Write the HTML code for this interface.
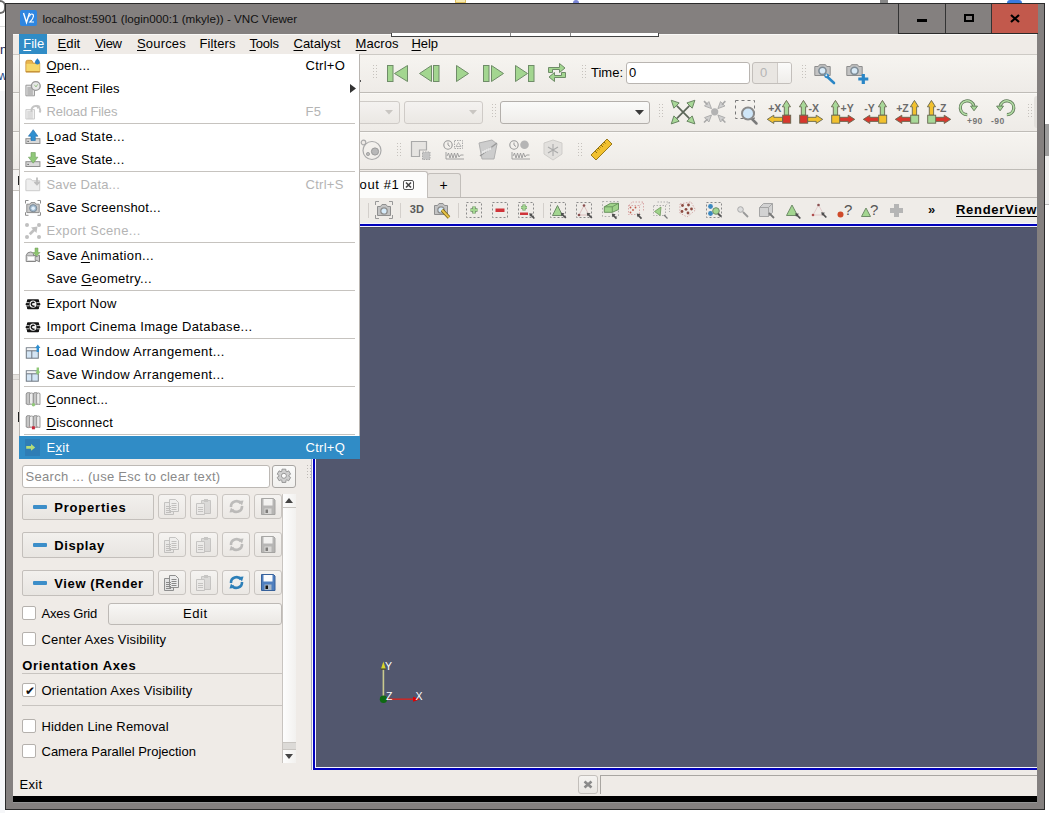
<!DOCTYPE html>
<html><head><meta charset="utf-8">
<style>
*{margin:0;padding:0;box-sizing:border-box}
html,body{width:1049px;height:813px;overflow:hidden;background:#fff;position:relative;font-family:"Liberation Sans",sans-serif;font-size:13px;color:#000}
.a{position:absolute}
svg.a{overflow:visible}
.t{position:absolute;white-space:nowrap;line-height:1}
u{text-decoration:underline;text-underline-offset:2px;text-decoration-thickness:1px}
.grip{width:4px;background-image:radial-gradient(circle at 1px 1px,#c3c0bc 0.9px,transparent 1px);background-size:3px 3px}
.btn{position:absolute;border:1px solid #bdb9b5;border-radius:3px;background:linear-gradient(#f7f6f4,#ebe8e4)}
.cb{position:absolute;width:14px;height:14px;border:1px solid #b5b1ad;background:#fff;border-radius:2px}
</style></head><body>

<div class="a" style="left:0px;top:0px;width:6px;height:14px;border:2px solid #6a6a6a;border-left:none;border-radius:0 7px 7px 0"></div>
<div class="a" style="left:0px;top:26px;width:5px;height:1px;background:#dcdcdc"></div>
<div class="a" style="left:1044px;top:124px;width:5px;height:32px;background:#9d9d9d"></div>
<div class="a" style="left:1044px;top:156px;width:5px;height:48px;background:#f0f0f0"></div>
<div class="a" style="left:1044px;top:204px;width:5px;height:1px;background:#bbb"></div>
<div class="a" style="left:455px;top:0px;width:11px;height:3px;background:#f5e9b0;border:1px solid #e0c060;border-top:none"></div>
<div class="a" style="left:573px;top:0px;width:6px;height:3px;background:#7a86d8;border-radius:3px 3px 0 0"></div>
<div class="a" style="left:880px;top:0px;width:8px;height:3px;background:#888"></div>
<div class="a" style="left:1007px;top:0px;width:15px;height:3px;background:#3a7be0;border-radius:6px 6px 0 0"></div>
<div class="a" style="left:0px;top:91px;width:5px;height:722px;background:#f6f7f9"></div>
<div class="t" style="left:0px;top:43.00px;font-size:13px;color:#1a2a5a;font-weight:normal;letter-spacing:0px;">n</div>
<div class="t" style="left:-2px;top:69.00px;font-size:13px;color:#2a4a8a;font-weight:normal;letter-spacing:0px;">w</div>
<div class="a" style="left:5px;top:3px;width:1040px;height:807px;background:#84807f;border:1px solid #2b2b2b"></div>
<div class="a" style="left:20px;top:10px;width:17px;height:16px;background:#2f86e0;border-radius:2px"></div>
<svg class="a" style="left:20px;top:10px" width="17" height="16" viewBox="0 0 17 16"><path d="M3.5 3 L6.5 12.5 L9.5 3" stroke="#fff" stroke-width="1.4" fill="none"/><path d="M9.5 6.5 Q10 4 11.8 4 Q13.6 4 13.4 6.5 Q13 9 10 12 L14 12" stroke="#fff" stroke-width="1.2" fill="none"/></svg>
<div class="t" style="left:42.5px;top:12.84px;font-size:11.65px;color:#111;font-weight:normal;letter-spacing:0px;">localhost:5901 (login000:1 (mkyle)) - VNC Viewer</div>
<div class="a" style="left:898px;top:4px;width:1px;height:29px;background:#333"></div>
<div class="a" style="left:945px;top:4px;width:1px;height:29px;background:#333"></div>
<div class="a" style="left:991px;top:4px;width:47px;height:29px;background:#c2594c;border-left:1px solid #333"></div>
<div class="a" style="left:917px;top:19px;width:10px;height:3px;background:#000"></div>
<div class="a" style="left:964px;top:14px;width:10px;height:8px;border:2px solid #000"></div>
<svg class="a" style="left:1010px;top:14px" width="10" height="9" viewBox="0 0 10 9"><path d="M1 1 L9 8 M9 1 L1 8" stroke="#000" stroke-width="2.2"/></svg>
<div class="a" style="left:13px;top:34px;width:1024px;height:762px;background:#efebe7"></div>
<div class="a" style="left:13px;top:34px;width:1024px;height:1px;background:#f9f8f6"></div>
<div class="a" style="left:898px;top:33px;width:140px;height:1px;background:#2a2a2a"></div>
<div class="a" style="left:13px;top:796px;width:1024px;height:6px;background:#000"></div>
<div class="a" style="left:13px;top:802px;width:1024px;height:1px;background:#959595"></div>
<div class="a" style="left:391px;top:33px;width:268px;height:4px;background:#fff;border:1px solid #444;border-top:none"></div>
<div class="a" style="left:510px;top:33px;width:1px;height:3px;background:#888"></div>
<div class="a" style="left:570px;top:33px;width:1px;height:3px;background:#888"></div>
<div class="a" style="left:13px;top:54px;width:1024px;height:1px;background:#cdcac5"></div>
<div class="a" style="left:19px;top:34px;width:28px;height:20px;background:#308cc6"></div>
<div class="t" style="left:23.3px;top:36.80px;font-size:13px;color:#fff;font-weight:normal;letter-spacing:-0.033px;"><u>F</u>ile</div>
<div class="t" style="left:57.6px;top:36.80px;font-size:13px;color:#000;font-weight:normal;letter-spacing:0.067px;"><u>E</u>dit</div>
<div class="t" style="left:95px;top:36.80px;font-size:13px;color:#000;font-weight:normal;letter-spacing:-0.333px;"><u>V</u>iew</div>
<div class="t" style="left:137px;top:36.80px;font-size:13px;color:#000;font-weight:normal;letter-spacing:0.167px;"><u>S</u>ources</div>
<div class="t" style="left:199.5px;top:36.80px;font-size:13px;color:#000;font-weight:normal;letter-spacing:0.083px;">Fi<u>l</u>ters</div>
<div class="t" style="left:249.5px;top:36.80px;font-size:13px;color:#000;font-weight:normal;letter-spacing:-0.2px;"><u>T</u>ools</div>
<div class="t" style="left:293.5px;top:36.80px;font-size:13px;color:#000;font-weight:normal;letter-spacing:0.0px;"><u>C</u>atalyst</div>
<div class="t" style="left:355.6px;top:36.80px;font-size:13px;color:#000;font-weight:normal;letter-spacing:0.04px;"><u>M</u>acros</div>
<div class="t" style="left:411.5px;top:36.80px;font-size:13px;color:#000;font-weight:normal;letter-spacing:-0.1px;"><u>H</u>elp</div>
<div class="a" style="left:13px;top:55px;width:1024px;height:37px;background:linear-gradient(#f6f4f0,#eeebe7)"></div>
<div class="a" style="left:13px;top:93px;width:1024px;height:38px;background:linear-gradient(#f6f4f0,#eeebe7)"></div>
<div class="a" style="left:13px;top:132px;width:1024px;height:37px;background:linear-gradient(#f6f4f0,#eeebe7)"></div>
<div class="a" style="left:13px;top:93px;width:1024px;height:1px;background:#faf9f6"></div>
<div class="a" style="left:13px;top:132px;width:1024px;height:1px;background:#faf9f6"></div>
<div class="a" style="left:13px;top:92px;width:1024px;height:1px;background:#bfbcb7"></div>
<div class="a" style="left:13px;top:131px;width:1024px;height:1px;background:#bfbcb7"></div>
<div class="a" style="left:13px;top:169px;width:1024px;height:1px;background:#bfbcb7"></div>
<div class="a" style="left:357px;top:80px;width:4px;height:2px;background:#555"></div>
<svg class="a" style="left:373px;top:65px" width="4" height="17" viewBox="0 0 4 17"><g fill="#c6c2bd"><rect x="0" y="0" width="1" height="1"/><rect x="3" y="0" width="1" height="1"/><rect x="0" y="3" width="1" height="1"/><rect x="3" y="3" width="1" height="1"/><rect x="0" y="6" width="1" height="1"/><rect x="3" y="6" width="1" height="1"/><rect x="0" y="9" width="1" height="1"/><rect x="3" y="9" width="1" height="1"/><rect x="0" y="12" width="1" height="1"/><rect x="3" y="12" width="1" height="1"/></g></svg>
<svg class="a" style="left:387px;top:65px" width="21" height="17" viewBox="0 0 21 17"><g fill="#a3d690" stroke="#6f8c68" stroke-width="1"><rect x="0.5" y="0.5" width="5.5" height="16"/><path d="M20.5 0.5 V16.5 L7.5 8.5z"/></g></svg>
<svg class="a" style="left:419px;top:65px" width="21" height="17" viewBox="0 0 21 17"><g fill="#a3d690" stroke="#6f8c68" stroke-width="1"><path d="M12.5 0.5 V16.5 L0.5 8.5z"/><rect x="14.5" y="0.5" width="5.5" height="16"/></g></svg>
<svg class="a" style="left:455px;top:65px" width="15" height="17" viewBox="0 0 15 17"><g fill="#a3d690" stroke="#6f8c68" stroke-width="1"><path d="M1.5 0.5 V16.5 L13.5 8.5z"/></g></svg>
<svg class="a" style="left:483px;top:65px" width="21" height="17" viewBox="0 0 21 17"><g fill="#a3d690" stroke="#6f8c68" stroke-width="1"><rect x="0.5" y="0.5" width="5.5" height="16"/><path d="M8.5 0.5 V16.5 L20.5 8.5z"/></g></svg>
<svg class="a" style="left:515px;top:65px" width="21" height="17" viewBox="0 0 21 17"><g fill="#a3d690" stroke="#6f8c68" stroke-width="1"><path d="M0.5 0.5 V16.5 L12.5 8.5z"/><rect x="13.5" y="0.5" width="5.5" height="16"/></g></svg>
<svg class="a" style="left:548px;top:63px" width="18" height="19" viewBox="0 0 18 19"><g fill="#a3d690" stroke="#6f8c68" stroke-width="1"><path d="M0.5 4.5 h11 v-4 l5.5 4.5 -5.5 4.5 v-3 h-7 v3 h-4z"/><path d="M17.5 14.5 h-11 v4 l-5.5 -4.5 5.5 -4.5 v3 h7 v-3 h4z"/></g></svg>
<svg class="a" style="left:582px;top:65px" width="4" height="17" viewBox="0 0 4 17"><g fill="#c6c2bd"><rect x="0" y="0" width="1" height="1"/><rect x="3" y="0" width="1" height="1"/><rect x="0" y="3" width="1" height="1"/><rect x="3" y="3" width="1" height="1"/><rect x="0" y="6" width="1" height="1"/><rect x="3" y="6" width="1" height="1"/><rect x="0" y="9" width="1" height="1"/><rect x="3" y="9" width="1" height="1"/><rect x="0" y="12" width="1" height="1"/><rect x="3" y="12" width="1" height="1"/></g></svg>
<div class="t" style="left:591px;top:66.40px;font-size:13px;color:#000;font-weight:normal;letter-spacing:0.0px;">Time:</div>
<div class="a" style="left:626px;top:62px;width:124px;height:22px;background:#fff;border:1px solid #b9b5b1;border-radius:3px"></div>
<div class="t" style="left:629px;top:66.40px;font-size:13px;color:#000;font-weight:normal;letter-spacing:0.2px;">0</div>
<div class="a" style="left:752px;top:62px;width:40px;height:22px;background:#e9e6e2;border:1px solid #c3bfbb;border-radius:3px"></div>
<div class="a" style="left:777px;top:63px;width:1px;height:20px;background:#cfcbc7"></div>
<div class="t" style="left:760px;top:66.40px;font-size:13px;color:#b5b5b5;font-weight:normal;letter-spacing:0.2px;">0</div>
<svg class="a" style="left:802px;top:65px" width="4" height="17" viewBox="0 0 4 17"><g fill="#c6c2bd"><rect x="0" y="0" width="1" height="1"/><rect x="3" y="0" width="1" height="1"/><rect x="0" y="3" width="1" height="1"/><rect x="3" y="3" width="1" height="1"/><rect x="0" y="6" width="1" height="1"/><rect x="3" y="6" width="1" height="1"/><rect x="0" y="9" width="1" height="1"/><rect x="3" y="9" width="1" height="1"/><rect x="0" y="12" width="1" height="1"/><rect x="3" y="12" width="1" height="1"/></g></svg>
<svg class="a" style="left:814px;top:63px" width="24" height="22" viewBox="0 0 24 22"><path d="M0.8 3.5 h3.5 l1.2 -1.8 h6 l1.2 1.8 h3.5 v9 h-15.4z" fill="#c3c3c3" stroke="#8d8d8d" stroke-linejoin="round"/><circle cx="8.5" cy="7.8" r="3.6" fill="#d8e9f6" stroke="#7f8c96" stroke-width="1.6"/><path d="M13 13.5 L20 20" stroke="#2a86c6" stroke-width="2.6" stroke-linecap="round"/><circle cx="12.6" cy="12.8" r="2.4" fill="#2a86c6"/><circle cx="12.3" cy="12.3" r="1" fill="#efebe7"/></svg>
<svg class="a" style="left:846px;top:63px" width="24" height="22" viewBox="0 0 24 22"><path d="M0.8 3.5 h3.5 l1.2 -1.8 h6 l1.2 1.8 h3.5 v9 h-15.4z" fill="#c3c3c3" stroke="#8d8d8d" stroke-linejoin="round"/><circle cx="8.5" cy="7.8" r="3.6" fill="#d8e9f6" stroke="#7f8c96" stroke-width="1.6"/><path d="M17.3 11 v10 M12.3 16 h10" stroke="#2a86c6" stroke-width="3.2"/></svg>
<div class="a" style="left:778px;top:63px;width:13px;height:20px;background:linear-gradient(#fbfbfa,#efedea);border-radius:0 2px 2px 0"></div>
<div class="a" style="left:300px;top:101px;width:100px;height:23px;background:linear-gradient(#f4f2f0,#ebe8e4);border:1px solid #cfcbc7;border-radius:3px"></div>
<svg class="a" style="left:385px;top:110px" width="8" height="5" viewBox="0 0 8 5"><path d="M0 0h8l-4 4.5z" fill="#c9c6c2"/></svg>
<div class="a" style="left:404px;top:101px;width:79px;height:23px;background:linear-gradient(#f4f2f0,#ebe8e4);border:1px solid #cfcbc7;border-radius:3px"></div>
<svg class="a" style="left:469px;top:110px" width="8" height="5" viewBox="0 0 8 5"><path d="M0 0h8l-4 4.5z" fill="#c9c6c2"/></svg>
<svg class="a" style="left:492px;top:104px" width="4" height="17" viewBox="0 0 4 17"><g fill="#c6c2bd"><rect x="0" y="0" width="1" height="1"/><rect x="3" y="0" width="1" height="1"/><rect x="0" y="3" width="1" height="1"/><rect x="3" y="3" width="1" height="1"/><rect x="0" y="6" width="1" height="1"/><rect x="3" y="6" width="1" height="1"/><rect x="0" y="9" width="1" height="1"/><rect x="3" y="9" width="1" height="1"/><rect x="0" y="12" width="1" height="1"/><rect x="3" y="12" width="1" height="1"/></g></svg>
<div class="a" style="left:500px;top:101px;width:150px;height:23px;background:linear-gradient(#fafaf9,#efedea);border:1px solid #b3afab;border-radius:3px"></div>
<svg class="a" style="left:635px;top:110px" width="9" height="5" viewBox="0 0 9 5"><path d="M0 0h9l-4.5 5z" fill="#3a3a3a"/></svg>
<svg class="a" style="left:659px;top:104px" width="4" height="17" viewBox="0 0 4 17"><g fill="#c6c2bd"><rect x="0" y="0" width="1" height="1"/><rect x="3" y="0" width="1" height="1"/><rect x="0" y="3" width="1" height="1"/><rect x="3" y="3" width="1" height="1"/><rect x="0" y="6" width="1" height="1"/><rect x="3" y="6" width="1" height="1"/><rect x="0" y="9" width="1" height="1"/><rect x="3" y="9" width="1" height="1"/><rect x="0" y="12" width="1" height="1"/><rect x="3" y="12" width="1" height="1"/></g></svg>
<svg class="a" style="left:668px;top:97px" width="30" height="30" viewBox="0 0 30 30"><path d="M8.9 8.9 L21.3 21.3 M21.3 8.9 L8.9 21.3" stroke="#5c6659" stroke-width="1.7"/><g fill="#a8d898" stroke="#5f7a58" stroke-width="0.9" stroke-linejoin="round"><path d="M3.25 3.25 L11.2 5.9 L5.9 11.2z"/><path d="M26.9 3.25 L18.9 5.9 L24.2 11.2z"/><path d="M3.25 26.9 L11.2 24.2 L5.9 18.9z"/><path d="M26.9 26.9 L18.9 24.2 L24.2 18.9z"/></g></svg>
<svg class="a" style="left:668px;top:97px" width="62" height="30" viewBox="0 0 62 30"><circle cx="46.7" cy="14.8" r="3.6" fill="#b3b3b3"/><g fill="#cfcfcf" stroke="#a8a8a8" stroke-width="0.9" stroke-linejoin="round"><path d="M43.5 11.600000000000001 L36.5 9.000000000000002 L40.9 4.600000000000001z"/><path d="M39.5 7.600000000000001 L36.0 4.100000000000001" stroke-width="1.6"/><path d="M49.900000000000006 11.600000000000001 L56.900000000000006 9.000000000000002 L52.50000000000001 4.600000000000001z"/><path d="M53.900000000000006 7.600000000000001 L57.400000000000006 4.100000000000001" stroke-width="1.6"/><path d="M43.5 18.0 L36.5 20.6 L40.9 25.0z"/><path d="M39.5 22.0 L36.0 25.5" stroke-width="1.6"/><path d="M49.900000000000006 18.0 L56.900000000000006 20.6 L52.50000000000001 25.0z"/><path d="M53.900000000000006 22.0 L57.400000000000006 25.5" stroke-width="1.6"/></g></svg>
<svg class="a" style="left:735px;top:100px" width="25" height="25" viewBox="0 0 25 25"><rect x="0.5" y="0.5" width="19" height="18" fill="none" stroke="#777" stroke-dasharray="3 3"/><path d="M15 17 L21.5 23.5" stroke="#7a7a7a" stroke-width="2.5" stroke-linecap="round"/><circle cx="13" cy="13.5" r="6" fill="#cfe6f8" stroke="#8a8a8a" stroke-width="2"/></svg>
<svg class="a" style="left:767px;top:100px" width="25" height="24" viewBox="0 0 25 24"><path d="M15.5 17.3 H6.8 V15.2 L0.3 19.35 L6.8 23.5 V21.4 H15.5z" fill="#f2c12e" stroke="#66664e" stroke-width="0.9" stroke-linejoin="round"/><path d="M19.45 0.4 L23.5 6.8 H21.6 V15.2 H17.3 V6.8 H15.399999999999999z" fill="#a8d898" stroke="#66664e" stroke-width="0.9" stroke-linejoin="round"/><rect x="15.7" y="15.2" width="8" height="8" fill="#d8372d" stroke="#66664e" stroke-width="0.9"/><text x="1.2" y="11.7" font-family="Liberation Sans" font-weight="bold" font-size="10.5" fill="#6a6a6a">+X</text></svg>
<svg class="a" style="left:799px;top:100px" width="25" height="24" viewBox="0 0 25 24"><path d="M8.5 17.3 H17.2 V15.2 L23.7 19.35 L17.2 23.5 V21.4 H8.5z" fill="#f2c12e" stroke="#66664e" stroke-width="0.9" stroke-linejoin="round"/><path d="M4.45 0.4 L8.5 6.8 H6.6000000000000005 V15.2 H2.3000000000000003 V6.8 H0.4z" fill="#a8d898" stroke="#66664e" stroke-width="0.9" stroke-linejoin="round"/><rect x="0.7" y="15.2" width="8" height="8" fill="#d8372d" stroke="#66664e" stroke-width="0.9"/><text x="9.5" y="11.7" font-family="Liberation Sans" font-weight="bold" font-size="10.5" fill="#6a6a6a">-X</text></svg>
<svg class="a" style="left:831px;top:100px" width="25" height="24" viewBox="0 0 25 24"><path d="M8.5 17.3 H17.2 V15.2 L23.7 19.35 L17.2 23.5 V21.4 H8.5z" fill="#d8372d" stroke="#66664e" stroke-width="0.9" stroke-linejoin="round"/><path d="M4.45 0.4 L8.5 6.8 H6.6000000000000005 V15.2 H2.3000000000000003 V6.8 H0.4z" fill="#a8d898" stroke="#66664e" stroke-width="0.9" stroke-linejoin="round"/><rect x="0.7" y="15.2" width="8" height="8" fill="#f2c12e" stroke="#66664e" stroke-width="0.9"/><text x="9.5" y="11.7" font-family="Liberation Sans" font-weight="bold" font-size="10.5" fill="#6a6a6a">+Y</text></svg>
<svg class="a" style="left:863px;top:100px" width="25" height="24" viewBox="0 0 25 24"><path d="M15.5 17.3 H6.8 V15.2 L0.3 19.35 L6.8 23.5 V21.4 H15.5z" fill="#d8372d" stroke="#66664e" stroke-width="0.9" stroke-linejoin="round"/><path d="M19.45 0.4 L23.5 6.8 H21.6 V15.2 H17.3 V6.8 H15.399999999999999z" fill="#a8d898" stroke="#66664e" stroke-width="0.9" stroke-linejoin="round"/><rect x="15.7" y="15.2" width="8" height="8" fill="#f2c12e" stroke="#66664e" stroke-width="0.9"/><text x="1.2" y="11.7" font-family="Liberation Sans" font-weight="bold" font-size="10.5" fill="#6a6a6a">-Y</text></svg>
<svg class="a" style="left:895px;top:100px" width="25" height="24" viewBox="0 0 25 24"><path d="M15.5 17.3 H6.8 V15.2 L0.3 19.35 L6.8 23.5 V21.4 H15.5z" fill="#d8372d" stroke="#66664e" stroke-width="0.9" stroke-linejoin="round"/><path d="M19.45 0.4 L23.5 6.8 H21.6 V15.2 H17.3 V6.8 H15.399999999999999z" fill="#f2c12e" stroke="#66664e" stroke-width="0.9" stroke-linejoin="round"/><rect x="15.7" y="15.2" width="8" height="8" fill="#a8d898" stroke="#66664e" stroke-width="0.9"/><text x="1.2" y="11.7" font-family="Liberation Sans" font-weight="bold" font-size="10.5" fill="#6a6a6a">+Z</text></svg>
<svg class="a" style="left:927px;top:100px" width="25" height="24" viewBox="0 0 25 24"><path d="M8.5 17.3 H17.2 V15.2 L23.7 19.35 L17.2 23.5 V21.4 H8.5z" fill="#d8372d" stroke="#66664e" stroke-width="0.9" stroke-linejoin="round"/><path d="M4.45 0.4 L8.5 6.8 H6.6000000000000005 V15.2 H2.3000000000000003 V6.8 H0.4z" fill="#f2c12e" stroke="#66664e" stroke-width="0.9" stroke-linejoin="round"/><rect x="0.7" y="15.2" width="8" height="8" fill="#a8d898" stroke="#66664e" stroke-width="0.9"/><text x="9.5" y="11.7" font-family="Liberation Sans" font-weight="bold" font-size="10.5" fill="#6a6a6a">-Z</text></svg>
<svg class="a" style="left:955px;top:96px" width="80" height="32" viewBox="0 0 80 32"><g fill="none"><path d="M12.2 18.65 A6.9 6.9 0 1 1 18.86 9.96" stroke="#5f7a58" stroke-width="3.2"/><path d="M12.2 18.65 A6.9 6.9 0 1 1 18.86 9.96" stroke="#b3dda5" stroke-width="1.5"/><path d="M51.9 18.65 A6.9 6.9 0 1 0 45.24 9.96" stroke="#5f7a58" stroke-width="3.2"/><path d="M51.9 18.65 A6.9 6.9 0 1 0 45.24 9.96" stroke="#b3dda5" stroke-width="1.5"/></g><g fill="#a8d898" stroke="#5f7a58" stroke-width="0.9" stroke-linejoin="round"><path d="M15.6 10.1 L22.5 10.1 L19 14.8z"/><path d="M48.5 10.1 L41.6 10.1 L45.1 14.8z"/></g><g font-family="Liberation Sans" font-weight="bold" font-size="8.6" fill="#777" letter-spacing="0.4"><text x="12" y="27.6">+90</text><text x="36" y="27.6">-90</text></g></svg>
<svg class="a" style="left:1028px;top:104px" width="4" height="17" viewBox="0 0 4 17"><g fill="#c6c2bd"><rect x="0" y="0" width="1" height="1"/><rect x="3" y="0" width="1" height="1"/><rect x="0" y="3" width="1" height="1"/><rect x="3" y="3" width="1" height="1"/><rect x="0" y="6" width="1" height="1"/><rect x="3" y="6" width="1" height="1"/><rect x="0" y="9" width="1" height="1"/><rect x="3" y="9" width="1" height="1"/><rect x="0" y="12" width="1" height="1"/><rect x="3" y="12" width="1" height="1"/></g></svg>
<div class="a" style="left:1034px;top:96px;width:4px;height:32px;background:#e4e1dd;border-radius:3px 0 0 3px"></div>
<svg class="a" style="left:360px;top:139px" width="22" height="22" viewBox="0 0 22 22"><g fill="none" stroke="#aaa" stroke-width="1.2"><circle cx="12" cy="11.5" r="9"/><circle cx="3.5" cy="3.5" r="2.3" fill="#efebe7"/></g><circle cx="15" cy="12.5" r="3.6" fill="#b8b8b8" stroke="#999"/><circle cx="8" cy="15" r="1.6" fill="#bbb" stroke="#999" stroke-width="0.8"/></svg>
<svg class="a" style="left:397px;top:143px" width="4" height="17" viewBox="0 0 4 17"><g fill="#c6c2bd"><rect x="0" y="0" width="1" height="1"/><rect x="3" y="0" width="1" height="1"/><rect x="0" y="3" width="1" height="1"/><rect x="3" y="3" width="1" height="1"/><rect x="0" y="6" width="1" height="1"/><rect x="3" y="6" width="1" height="1"/><rect x="0" y="9" width="1" height="1"/><rect x="3" y="9" width="1" height="1"/><rect x="0" y="12" width="1" height="1"/><rect x="3" y="12" width="1" height="1"/></g></svg>
<svg class="a" style="left:410px;top:140px" width="22" height="22" viewBox="0 0 22 22"><path d="M1.5 1.5 H16.5 V10 H9.5 V16.5 H1.5z" fill="#e6e4e1" stroke="#a9a9a9" stroke-width="1.2"/><rect x="12.5" y="12" width="7.5" height="7.5" fill="#c4c4c4" stroke="#aaa" stroke-dasharray="1.5 1"/></svg>
<svg class="a" style="left:443px;top:140px" width="22" height="22" viewBox="0 0 22 22"><circle cx="5" cy="5" r="4.2" fill="none" stroke="#999" stroke-width="1.1"/><path d="M5 2.5V5l2 1.5" stroke="#999" fill="none"/><rect x="11.5" y="0.5" width="8" height="8" fill="none" stroke="#aaa" stroke-dasharray="1.5 1"/><path d="M15.5 2.5 l2.5 4h-5z" fill="none" stroke="#aaa" stroke-width="0.8"/><path d="M3 12V19H21M4 16 l1.5-3 1.5 5 1.5-5 1.5 5 1.5-5 1.5 5 1.5-5 1.5 4 1.5-2h3" stroke="#999" fill="none" stroke-width="0.9"/></svg>
<svg class="a" style="left:477px;top:139px" width="22" height="22" viewBox="0 0 22 22"><path d="M2 4 L15 1 L20 5 L17 20 L5 20z" fill="#cdcdcd" stroke="#b0b0b0"/><path d="M3 17 L20 4" stroke="#9a9a9a" stroke-width="1.5"/><path d="M5 15 l1-3 1 2 1-3 1 2 1-3 1 2 1-3 1 2 1-3" stroke="#eee" fill="none" stroke-width="0.9"/></svg>
<svg class="a" style="left:509px;top:140px" width="22" height="22" viewBox="0 0 22 22"><circle cx="5" cy="5" r="4.2" fill="none" stroke="#999" stroke-width="1.1"/><path d="M5 2.5V5l2 1.5" stroke="#999" fill="none"/><circle cx="15.5" cy="4.8" r="4.3" fill="#b5b5b5"/><path d="M3 12V19H21M4 16 l1.5-3 1.5 5 1.5-5 1.5 5 1.5-5 1.5 5 1.5-5 1.5 4 1.5-2h3" stroke="#999" fill="none" stroke-width="0.9"/></svg>
<svg class="a" style="left:542px;top:139px" width="22" height="22" viewBox="0 0 22 22"><path d="M11 1 L20 4 V15 L11 21 L2 15 V4z" fill="#e2e0dd" stroke="#cfcdca"/><path d="M11 5V17M6 8L16 14M16 8L6 14" stroke="#aaa" stroke-width="1.1"/></svg>
<svg class="a" style="left:578px;top:143px" width="4" height="17" viewBox="0 0 4 17"><g fill="#c6c2bd"><rect x="0" y="0" width="1" height="1"/><rect x="3" y="0" width="1" height="1"/><rect x="0" y="3" width="1" height="1"/><rect x="3" y="3" width="1" height="1"/><rect x="0" y="6" width="1" height="1"/><rect x="3" y="6" width="1" height="1"/><rect x="0" y="9" width="1" height="1"/><rect x="3" y="9" width="1" height="1"/><rect x="0" y="12" width="1" height="1"/><rect x="3" y="12" width="1" height="1"/></g></svg>
<svg class="a" style="left:590px;top:138px" width="23" height="23" viewBox="0 0 23 23"><path d="M1 17 L17 1 L22 6 L6 22z" fill="#f2c12e" stroke="#9a7a1a"/><path d="M5 13l2 2M8 10l1.5 1.5M11 7l2 2M14 4l1.5 1.5M6.5 11.5l1 1M9.5 8.5l1 1M12.5 5.5l1 1" stroke="#7a6010" stroke-width="0.9"/></svg>
<div class="a" style="left:311px;top:197px;width:726px;height:1px;background:#bdb9b5"></div>
<div class="a" style="left:311px;top:198px;width:726px;height:25px;background:#efece8"></div>
<div class="a" style="left:300px;top:171px;width:128px;height:27px;background:#fcfcfb;border:1px solid #c2beba;border-bottom:none;border-radius:3px 3px 0 0"></div>
<div class="t" style="left:359.6px;top:177.80px;font-size:13px;color:#000;font-weight:normal;letter-spacing:0.6px;">out #1</div>
<div class="a" style="left:403px;top:180px;width:11px;height:10px;background:#fff;border:1px solid #555;border-radius:2px"></div>
<svg class="a" style="left:405px;top:182px" width="7" height="6" viewBox="0 0 7 6"><path d="M1 0.5 L6 5.5 M6 0.5 L1 5.5" stroke="#444" stroke-width="1.6"/></svg>
<div class="a" style="left:427px;top:173px;width:34px;height:24px;background:#e8e5e1;border:1px solid #c2beba;border-bottom:none;border-radius:3px 3px 0 0"></div>
<div class="t" style="left:439.5px;top:178.15px;font-size:14px;color:#000;font-weight:normal;letter-spacing:0px;">+</div>
<div class="a" style="left:368px;top:203px;width:1px;height:15px;background:#d3cfcb"></div>
<div class="a" style="left:400px;top:203px;width:1px;height:15px;background:#d3cfcb"></div>
<div class="a" style="left:458px;top:203px;width:1px;height:15px;background:#d3cfcb"></div>
<div class="a" style="left:543px;top:203px;width:1px;height:15px;background:#d3cfcb"></div>
<svg class="a" style="left:375px;top:201px" width="18" height="18" viewBox="0 0 18 18"><path d="M0.5 4v-3.5h3.5M14 0.5h3.5v3.5M17.5 14v3.5h-3.5M4 17.5h-3.5v-3.5" stroke="#999" fill="none"/><path d="M2.5 5.5h3l1.5-2h4l1.5 2h3v9h-13z" fill="#c3c3c3" stroke="#8f8f8f"/><circle cx="9" cy="10" r="3.2" fill="#d6ebfa" stroke="#8f8f8f" stroke-width="1.3"/></svg>
<div class="t" style="left:409.7px;top:204.49px;font-size:11px;color:#5a5a5a;font-weight:bold;letter-spacing:0.2px;">3D</div>
<svg class="a" style="left:434px;top:202px" width="17" height="17" viewBox="0 0 17 17"><path d="M0.5 3.5h3l1.5-2h4l1.5 2h3v9h-13z" fill="#c3c3c3" stroke="#8f8f8f"/><circle cx="7" cy="8" r="3.2" fill="#d6ebfa" stroke="#8f8f8f" stroke-width="1.3"/><path d="M8 8 L15 15.5" stroke="#6f5a10" stroke-width="3.4"/><path d="M8 8 L15 15.5" stroke="#e6c34a" stroke-width="2"/></svg>
<svg class="a" style="left:466px;top:202px" width="16" height="16" viewBox="0 0 16 16"><rect x="0.5" y="0.5" width="15" height="15" fill="none" stroke="#8a8a8a" stroke-dasharray="2 2"/><path d="M8 4.5v7M4.5 8h7" stroke="#6f8c68" stroke-width="3.6"/><path d="M8 4.5v7M4.5 8h7" stroke="#a3d690" stroke-width="2.2"/></svg>
<svg class="a" style="left:492px;top:202px" width="16" height="16" viewBox="0 0 16 16"><rect x="0.5" y="0.5" width="15" height="15" fill="none" stroke="#8a8a8a" stroke-dasharray="2 2"/><rect x="3.5" y="6.5" width="9" height="3.5" fill="#d0343a"/></svg>
<svg class="a" style="left:518px;top:202px" width="16" height="16" viewBox="0 0 16 16"><rect x="0.5" y="0.5" width="15" height="15" fill="none" stroke="#8a8a8a" stroke-dasharray="2 2"/><path d="M6 2.5v6M3 5.5h6" stroke="#6f8c68" stroke-width="3.2"/><path d="M6 2.5v6M3 5.5h6" stroke="#a3d690" stroke-width="1.8"/><rect x="2" y="10.5" width="8" height="2.5" fill="#d0343a"/><path d="M12.3 12.3 l4 4.2" stroke="#505050" stroke-width="1.7"/><path d="M11.2 11.2 l3.8 0.6 -3 3z" fill="#505050"/></svg>
<svg class="a" style="left:550px;top:202px" width="16" height="16" viewBox="0 0 16 16"><rect x="0.5" y="0.5" width="15" height="15" fill="none" stroke="#8a8a8a" stroke-dasharray="2 2"/><path d="M2.5 13.5 L7.5 3.5 L12.5 13.5z" fill="#a3d690" stroke="#6f8c68"/><path d="M11.8 11.8 l4 4.2" stroke="#505050" stroke-width="1.7"/><path d="M10.7 10.7 l3.8 0.6 -3 3z" fill="#505050"/></svg>
<svg class="a" style="left:576px;top:202px" width="16" height="16" viewBox="0 0 16 16"><rect x="0.5" y="0.5" width="15" height="15" fill="none" stroke="#8a8a8a" stroke-dasharray="2 2"/><path d="M3 13 L8 3.5 L13 13z" fill="none" stroke="#d9b9b9" stroke-width="0.9"/><circle cx="8" cy="3.5" r="1.3" fill="#8a5050"/><circle cx="3" cy="13" r="1.3" fill="#8a5050"/><path d="M11.8 11.8 l4 4.2" stroke="#505050" stroke-width="1.7"/><path d="M10.7 10.7 l3.8 0.6 -3 3z" fill="#505050"/></svg>
<svg class="a" style="left:602px;top:201px" width="18" height="19" viewBox="0 0 18 19"><rect x="0.5" y="0.5" width="16" height="15" fill="none" stroke="#9a9a9a" stroke-dasharray="1.6 2" opacity="0.8"/><path d="M2.3 5.8 L8.5 2.3 H16.5 V8.5 L10.3 11.3 H2.3z" fill="#9fd38a" stroke="#5f8a55" stroke-width="0.9" stroke-linejoin="round"/><path d="M2.3 5.8 H10.3 V11.3 M10.3 5.8 L16.5 2.3" stroke="#5f8a55" stroke-width="0.8" fill="none"/><path d="M10.5 13.5 l4 4.2" stroke="#505050" stroke-width="1.8"/><path d="M9.8 12.6 l3.8 0.6 -3 3z" fill="#505050"/></svg>
<svg class="a" style="left:627px;top:201px" width="18" height="19" viewBox="0 0 18 19"><g stroke="#d7a3a3" stroke-dasharray="1.5 1.5" fill="none" stroke-width="0.9"><path d="M1.5 4.5 H12.5 V13.5 H1.5z M5.5 1 H16.5 V10 M12.5 4.5 L16.5 1 M1.5 4.5 L5.5 1"/></g><g fill="#c25a4a"><circle cx="3.5" cy="6.5" r="0.9"/><circle cx="6" cy="9" r="0.9"/><circle cx="3.5" cy="11.5" r="0.9"/><circle cx="8.5" cy="6.5" r="0.9"/></g><path d="M10.5 13.5 l4 4.2" stroke="#505050" stroke-width="1.8"/><path d="M9.8 12.6 l3.8 0.6 -3 3z" fill="#505050"/></svg>
<svg class="a" style="left:652px;top:201px" width="19" height="19" viewBox="0 0 19 19"><g stroke="#a8a8a8" stroke-dasharray="1.5 1.5" fill="none" stroke-width="0.9"><path d="M1.5 4.5 H13.5 V14.5 H1.5z M5.5 1 H17.5 V11 M13.5 4.5 L17.5 1"/></g><path d="M2.5 10.5 L9 6 L8.2 14.5z" fill="#9fd38a" stroke="#6f9a5c" stroke-width="0.8"/><path d="M12 14 l3.5 3.5" stroke="#7a7a7a" stroke-width="1.2"/></svg>
<svg class="a" style="left:679px;top:201px" width="18" height="19" viewBox="0 0 18 19"><path d="M1 3 L12 0.8 L16.5 9 L8 16 L0.8 12z" fill="none" stroke="#d4a8a8" stroke-dasharray="1.5 1.5"/><g fill="#8c4a40"><circle cx="3.5" cy="4.5" r="1.4"/><circle cx="9.5" cy="4" r="1.4"/><circle cx="7" cy="8.3" r="1.4"/><circle cx="3" cy="10.5" r="1.4"/><circle cx="9" cy="12" r="1.4"/><circle cx="12.5" cy="8" r="1.4"/></g></svg>
<svg class="a" style="left:706px;top:202px" width="16" height="16" viewBox="0 0 16 16"><rect x="0.5" y="0.5" width="15" height="15" fill="none" stroke="#8a8a8a" stroke-dasharray="2 2"/><circle cx="4.5" cy="4.5" r="2.4" fill="#3b88c0"/><circle cx="4.5" cy="11.5" r="2.4" fill="#3b88c0"/><circle cx="10" cy="9" r="3.3" fill="#a3d690" stroke="#6f8c68"/><path d="M12 11.5l3 3" stroke="#555" stroke-width="2"/></svg>
<svg class="a" style="left:737px;top:206px" width="12" height="12" viewBox="0 0 12 12"><circle cx="3.5" cy="3.5" r="2.8" fill="#ddd" stroke="#aaa"/><path d="M6 6 l5 5" stroke="#999" stroke-width="1.8"/></svg>
<svg class="a" style="left:758px;top:202px" width="17" height="16" viewBox="0 0 17 16"><path d="M1.5 5.5 L5.5 1.5 H14.5 V10.5 L10.5 14.5 H1.5z" fill="#d2d2d2" stroke="#a5a5a5"/><path d="M1.5 5.5 H10.5 V14.5 M10.5 5.5 L14.5 1.5" stroke="#a5a5a5" fill="none"/><path d="M11 11 l5 5" stroke="#777" stroke-width="1.8"/></svg>
<svg class="a" style="left:786px;top:204px" width="15" height="14" viewBox="0 0 15 14"><path d="M0.5 11.5 L6 1 L11.5 11.5z" fill="#a3d690" stroke="#6f8c68"/><path d="M10.3 10.3 l4 4.2" stroke="#505050" stroke-width="1.7"/><path d="M9.2 9.2 l3.8 0.6 -3 3z" fill="#505050"/></svg>
<svg class="a" style="left:811px;top:202px" width="16" height="16" viewBox="0 0 16 16"><path d="M2 13 L7.5 3 L13 13z" fill="none" stroke="#e0c8c8" stroke-width="0.9"/><circle cx="7.5" cy="3" r="1.3" fill="#8a5050"/><circle cx="2" cy="13" r="1.3" fill="#b05050"/><path d="M11.3 11.3 l4 4.2" stroke="#505050" stroke-width="1.7"/><path d="M10.2 10.2 l3.8 0.6 -3 3z" fill="#505050"/></svg>
<svg class="a" style="left:837px;top:202px" width="16" height="16" viewBox="0 0 16 16"><circle cx="3.5" cy="12.5" r="3" fill="#cf4a2a"/></svg>
<div class="t" style="left:844px;top:201.80px;font-size:15px;color:#555;font-weight:normal;letter-spacing:0px;">?</div>
<svg class="a" style="left:861px;top:204px" width="12" height="14" viewBox="0 0 12 14"><path d="M0.5 12.5 L5 4 L9.5 12.5z" fill="#a3d690" stroke="#6f8c68"/></svg>
<div class="t" style="left:870px;top:201.80px;font-size:15px;color:#555;font-weight:normal;letter-spacing:0px;">?</div>
<svg class="a" style="left:889px;top:203px" width="15" height="15" viewBox="0 0 15 15"><path d="M7.5 1v13M1 7.5h13" stroke="#b5b5b5" stroke-width="5"/></svg>
<div class="t" style="left:928px;top:203.00px;font-size:13px;color:#111;font-weight:bold;letter-spacing:0px;">&#187;</div>
<div class="t" style="left:956px;top:203.00px;font-size:13px;color:#000;font-weight:bold;letter-spacing:0.7px;"><u>RenderView</u></div>
<div class="a" style="left:311px;top:223px;width:726px;height:547px;background:#f6f6fd;border-left:1px solid #a9a9b9"></div>
<div class="a" style="left:313px;top:224px;width:724px;height:546px;background:#0000bb"></div>
<div class="a" style="left:315px;top:226px;width:722px;height:542px;background:#f4f4ff"></div>
<div class="a" style="left:316px;top:227px;width:721px;height:540px;background:#52576e"></div>
<div class="a" style="left:316px;top:227px;width:721px;height:1px;background:#494c5d"></div>
<svg class="a" style="left:370px;top:655px" width="60" height="55" viewBox="0 0 60 55"><path d="M13.4 14 V41" stroke="#c9c98e" stroke-width="1.6"/><path d="M10.8 14.5 L13.4 6.5 L15.9 14.5z" fill="#d6d62a"/><rect x="10.8" y="13.5" width="5.1" height="1.2" fill="#333"/><circle cx="13.5" cy="44.3" r="3.7" fill="#0f6a12"/><path d="M17 44.2 H43.5" stroke="#c42a2a" stroke-width="1.6"/><path d="M43 41.8 L50 44.2 L43 46.7z" fill="#e00000"/><g font-family="Liberation Sans" font-size="10.5" fill="#fff"><text x="15" y="14.5">Y</text><text x="16" y="44.7">Z</text><text x="45.5" y="45">X</text></g></svg>
<div class="a" style="left:13px;top:170px;width:7px;height:20px;background:#f5f3f1"></div>
<div class="a" style="left:13px;top:190px;width:7px;height:184px;background:#fff"></div>
<div class="a" style="left:13px;top:190px;width:7px;height:1px;background:#c8c4c0"></div>
<div class="a" style="left:13px;top:374px;width:7px;height:6px;background:#e6e3df;border-top:1px solid #cfcbc7;border-bottom:1px solid #cfcbc7"></div>
<div class="a" style="left:18px;top:176px;width:1px;height:9px;background:#222"></div>
<div class="a" style="left:18px;top:412px;width:1px;height:10px;background:#222"></div>
<div class="a" style="left:22px;top:465px;width:248px;height:23px;background:#fff;border:1px solid #bdb9b5;border-radius:3px"></div>
<div class="t" style="left:25.5px;top:469.70px;font-size:13px;color:#8a8a8a;font-weight:normal;letter-spacing:0.294px;">Search ... (use Esc to clear text)</div>
<div class="a" style="left:272px;top:465px;width:24px;height:23px;background:linear-gradient(#fbfbfa,#f1f0ee);border:1px solid #a9a6a3;border-radius:3px"></div>
<svg class="a" style="left:272px;top:465px" width="24" height="23" viewBox="0 0 24 23"><path d="M9.86 6.23 L9.99 4.17 L13.81 4.17 L13.94 6.23 L14.83 6.75 L16.69 5.83 L18.60 9.14 L16.87 10.28 L16.87 11.32 L18.60 12.46 L16.69 15.77 L14.83 14.85 L13.94 15.37 L13.81 17.43 L9.99 17.43 L9.86 15.37 L8.97 14.85 L7.11 15.77 L5.20 12.46 L6.93 11.32 L6.93 10.28 L5.20 9.14 L7.11 5.83 L8.97 6.75z" fill="#cfcfcf" stroke="#8f8f8f" stroke-width="0.9" stroke-linejoin="round"/><circle cx="11.9" cy="10.8" r="2.5" fill="#fbfbfb" stroke="#8f8f8f" stroke-width="0.9"/></svg>
<div class="a" style="left:22px;top:494px;width:132px;height:26px;background:linear-gradient(#f2f0ed,#e8e5e1);border:1px solid #c3bfbb;border-radius:2px"></div>
<div class="a" style="left:33px;top:505px;width:14px;height:4px;background:#3c8ec9;border-radius:1px"></div>
<div class="t" style="left:54.3px;top:501.00px;font-size:13px;color:#000;font-weight:bold;letter-spacing:0.789px;">Properties</div>
<div class="a" style="left:158px;top:494px;width:28px;height:25px;background:linear-gradient(#f5f3f1,#ebe8e4);border:1px solid #c9c5c1;border-radius:3px"></div>
<div class="a" style="left:190px;top:494px;width:28px;height:25px;background:linear-gradient(#f5f3f1,#ebe8e4);border:1px solid #c9c5c1;border-radius:3px"></div>
<div class="a" style="left:222px;top:494px;width:28px;height:25px;background:linear-gradient(#f5f3f1,#ebe8e4);border:1px solid #c9c5c1;border-radius:3px"></div>
<div class="a" style="left:254px;top:494px;width:28px;height:25px;background:linear-gradient(#f5f3f1,#ebe8e4);border:1px solid #c9c5c1;border-radius:3px"></div>
<svg class="a" style="left:164px;top:499px" width="16" height="16" viewBox="0 0 16 16"><g opacity="0.45"><path d="M0.5 3.5h7l2 2v10h-9z" fill="#e2e2e2" stroke="#8f8f8f"/><path d="M5.5 0.5h6l3 3v9h-9z" fill="#ececec" stroke="#8f8f8f"/><path d="M2 7.5h5M2 9.5h5M2 11.5h5M2 13.5h5M7.5 4.5h5M7.5 6.5h5M7.5 8.5h5M7.5 10.5h5" stroke="#8a8a8a"/></g></svg>
<svg class="a" style="left:196px;top:499px" width="16" height="16" viewBox="0 0 16 16"><g opacity="0.4"><path d="M5.5 1.5h9v13h-9z" fill="#bbb" stroke="#888"/><rect x="8" y="0" width="4" height="3" fill="#888"/><path d="M0.5 4.5h8v11h-8z" fill="#e6e6e6" stroke="#888"/><path d="M2 8.5h5M2 10.5h5M2 12.5h5" stroke="#888"/></g></svg>
<svg class="a" style="left:228px;top:498px" width="17" height="17" viewBox="0 0 17 17"><g opacity="0.5"><path d="M3 9 A5.5 5.5 0 0 1 13 5.5" fill="none" stroke="#8a8a8a" stroke-width="2.6"/><path d="M14 8 A5.5 5.5 0 0 1 4 11.5" fill="none" stroke="#8a8a8a" stroke-width="2.6"/><path d="M10.5 3 L15.5 2.5 L14 7.5z" fill="#8a8a8a"/><path d="M6.5 14 L1.5 14.5 L3 9.5z" fill="#8a8a8a"/></g></svg>
<svg class="a" style="left:260px;top:498px" width="16" height="17" viewBox="0 0 16 17"><g opacity="0.55"><path d="M1.5 0.5h12l1.5 1.5v14.5h-13.5z" fill="#8a8a8a" stroke="#6a6a6a"/><rect x="3.5" y="1" width="9" height="6.5" fill="#f5f5f5"/><rect x="4.5" y="10.5" width="7" height="5.5" fill="#c8c8c8"/><rect x="5.5" y="11.5" width="2.5" height="3.5" fill="#222"/></g></svg>
<div class="a" style="left:22px;top:532px;width:132px;height:26px;background:linear-gradient(#f2f0ed,#e8e5e1);border:1px solid #c3bfbb;border-radius:2px"></div>
<div class="a" style="left:33px;top:543px;width:14px;height:4px;background:#3c8ec9;border-radius:1px"></div>
<div class="t" style="left:54.3px;top:539.00px;font-size:13px;color:#000;font-weight:bold;letter-spacing:0.6px;">Display</div>
<div class="a" style="left:158px;top:532px;width:28px;height:25px;background:linear-gradient(#f5f3f1,#ebe8e4);border:1px solid #c9c5c1;border-radius:3px"></div>
<div class="a" style="left:190px;top:532px;width:28px;height:25px;background:linear-gradient(#f5f3f1,#ebe8e4);border:1px solid #c9c5c1;border-radius:3px"></div>
<div class="a" style="left:222px;top:532px;width:28px;height:25px;background:linear-gradient(#f5f3f1,#ebe8e4);border:1px solid #c9c5c1;border-radius:3px"></div>
<div class="a" style="left:254px;top:532px;width:28px;height:25px;background:linear-gradient(#f5f3f1,#ebe8e4);border:1px solid #c9c5c1;border-radius:3px"></div>
<svg class="a" style="left:164px;top:537px" width="16" height="16" viewBox="0 0 16 16"><g opacity="0.45"><path d="M0.5 3.5h7l2 2v10h-9z" fill="#e2e2e2" stroke="#8f8f8f"/><path d="M5.5 0.5h6l3 3v9h-9z" fill="#ececec" stroke="#8f8f8f"/><path d="M2 7.5h5M2 9.5h5M2 11.5h5M2 13.5h5M7.5 4.5h5M7.5 6.5h5M7.5 8.5h5M7.5 10.5h5" stroke="#8a8a8a"/></g></svg>
<svg class="a" style="left:196px;top:537px" width="16" height="16" viewBox="0 0 16 16"><g opacity="0.4"><path d="M5.5 1.5h9v13h-9z" fill="#bbb" stroke="#888"/><rect x="8" y="0" width="4" height="3" fill="#888"/><path d="M0.5 4.5h8v11h-8z" fill="#e6e6e6" stroke="#888"/><path d="M2 8.5h5M2 10.5h5M2 12.5h5" stroke="#888"/></g></svg>
<svg class="a" style="left:228px;top:536px" width="17" height="17" viewBox="0 0 17 17"><g opacity="0.5"><path d="M3 9 A5.5 5.5 0 0 1 13 5.5" fill="none" stroke="#8a8a8a" stroke-width="2.6"/><path d="M14 8 A5.5 5.5 0 0 1 4 11.5" fill="none" stroke="#8a8a8a" stroke-width="2.6"/><path d="M10.5 3 L15.5 2.5 L14 7.5z" fill="#8a8a8a"/><path d="M6.5 14 L1.5 14.5 L3 9.5z" fill="#8a8a8a"/></g></svg>
<svg class="a" style="left:260px;top:536px" width="16" height="17" viewBox="0 0 16 17"><g opacity="0.55"><path d="M1.5 0.5h12l1.5 1.5v14.5h-13.5z" fill="#8a8a8a" stroke="#6a6a6a"/><rect x="3.5" y="1" width="9" height="6.5" fill="#f5f5f5"/><rect x="4.5" y="10.5" width="7" height="5.5" fill="#c8c8c8"/><rect x="5.5" y="11.5" width="2.5" height="3.5" fill="#222"/></g></svg>
<div class="a" style="left:22px;top:570px;width:132px;height:26px;background:linear-gradient(#f2f0ed,#e8e5e1);border:1px solid #c3bfbb;border-radius:2px"></div>
<div class="a" style="left:33px;top:581px;width:14px;height:4px;background:#3c8ec9;border-radius:1px"></div>
<div class="t" style="left:54.3px;top:577.00px;font-size:13px;color:#000;font-weight:bold;letter-spacing:0.609px;">View (Render</div>
<div class="a" style="left:158px;top:570px;width:28px;height:25px;background:linear-gradient(#f5f3f1,#ebe8e4);border:1px solid #c9c5c1;border-radius:3px"></div>
<div class="a" style="left:190px;top:570px;width:28px;height:25px;background:linear-gradient(#f5f3f1,#ebe8e4);border:1px solid #c9c5c1;border-radius:3px"></div>
<div class="a" style="left:222px;top:570px;width:28px;height:25px;background:linear-gradient(#f5f3f1,#ebe8e4);border:1px solid #c9c5c1;border-radius:3px"></div>
<div class="a" style="left:254px;top:570px;width:28px;height:25px;background:linear-gradient(#f5f3f1,#ebe8e4);border:1px solid #c9c5c1;border-radius:3px"></div>
<svg class="a" style="left:164px;top:575px" width="16" height="16" viewBox="0 0 16 16"><g opacity="1"><path d="M0.5 3.5h7l2 2v10h-9z" fill="#e2e2e2" stroke="#8f8f8f"/><path d="M5.5 0.5h6l3 3v9h-9z" fill="#ececec" stroke="#8f8f8f"/><path d="M2 7.5h5M2 9.5h5M2 11.5h5M2 13.5h5M7.5 4.5h5M7.5 6.5h5M7.5 8.5h5M7.5 10.5h5" stroke="#8a8a8a"/></g></svg>
<svg class="a" style="left:196px;top:575px" width="16" height="16" viewBox="0 0 16 16"><g opacity="0.4"><path d="M5.5 1.5h9v13h-9z" fill="#bbb" stroke="#888"/><rect x="8" y="0" width="4" height="3" fill="#888"/><path d="M0.5 4.5h8v11h-8z" fill="#e6e6e6" stroke="#888"/><path d="M2 8.5h5M2 10.5h5M2 12.5h5" stroke="#888"/></g></svg>
<svg class="a" style="left:228px;top:574px" width="17" height="17" viewBox="0 0 17 17"><path d="M3 9 A5.5 5.5 0 0 1 13 5.5" fill="none" stroke="#2d7fb8" stroke-width="2.6"/><path d="M14 8 A5.5 5.5 0 0 1 4 11.5" fill="none" stroke="#2d7fb8" stroke-width="2.6"/><path d="M10.5 3 L15.5 2.5 L14 7.5z" fill="#2d7fb8"/><path d="M6.5 14 L1.5 14.5 L3 9.5z" fill="#2d7fb8"/></svg>
<svg class="a" style="left:260px;top:574px" width="16" height="17" viewBox="0 0 16 17"><path d="M1.5 0.5h12l1.5 1.5v14.5h-13.5z" fill="#4f7fbf" stroke="#36609a"/><rect x="3.5" y="1" width="9" height="6.5" fill="#fafbfd"/><rect x="4.5" y="10.5" width="7" height="5.5" fill="#aab8c8"/><rect x="5.5" y="11.5" width="2.5" height="3.5" fill="#111"/></svg>
<div class="a" style="left:282px;top:494px;width:14px;height:269px;background:linear-gradient(90deg,#fdfdfd,#f2f1ef);border-left:1px solid #c8c4c0"></div>
<svg class="a" style="left:285px;top:498px" width="8" height="5" viewBox="0 0 8 5"><path d="M0 5 L4 0 L8 5z" fill="#444"/></svg>
<div class="a" style="left:283px;top:507px;width:13px;height:1px;background:#c8c5c1"></div>
<svg class="a" style="left:307px;top:465px" width="4" height="16" viewBox="0 0 4 16"><g fill="#bdb9b5"><rect x="0" y="0" width="1" height="1"/><rect x="3" y="0" width="1" height="1"/><rect x="0" y="3" width="1" height="1"/><rect x="3" y="3" width="1" height="1"/><rect x="0" y="6" width="1" height="1"/><rect x="3" y="6" width="1" height="1"/><rect x="0" y="9" width="1" height="1"/><rect x="3" y="9" width="1" height="1"/><rect x="0" y="12" width="1" height="1"/><rect x="3" y="12" width="1" height="1"/></g></svg>
<div class="a" style="left:283px;top:742px;width:13px;height:8px;background:#dcdad7;border-top:1px solid #c8c5c1;border-bottom:1px solid #c8c5c1"></div>
<svg class="a" style="left:285px;top:754px" width="8" height="5" viewBox="0 0 8 5"><path d="M0 0 L4 5 L8 0z" fill="#444"/></svg>
<div class="a" style="left:22px;top:606px;width:14px;height:14px;background:#fff;border:1px solid #b5b1ad;border-radius:2px"></div>
<div class="t" style="left:41.5px;top:606.70px;font-size:13px;color:#000;font-weight:normal;letter-spacing:-0.162px;">Axes Grid</div>
<div class="a" style="left:108px;top:603px;width:174px;height:22px;background:linear-gradient(#f8f7f5,#ebe8e4);border:1px solid #bdb9b5;border-radius:3px"></div>
<div class="t" style="left:183px;top:606.70px;font-size:13px;color:#000;font-weight:normal;letter-spacing:0.567px;">Edit</div>
<div class="a" style="left:22px;top:632px;width:14px;height:14px;background:#fff;border:1px solid #b5b1ad;border-radius:2px"></div>
<div class="t" style="left:41.5px;top:633.30px;font-size:13px;color:#000;font-weight:normal;letter-spacing:0.162px;">Center Axes Visibility</div>
<div class="t" style="left:22.3px;top:658.50px;font-size:13px;color:#000;font-weight:bold;letter-spacing:0.66px;">Orientation Axes</div>
<div class="a" style="left:22px;top:673px;width:260px;height:1px;background:#c8c4c0"></div>
<div class="a" style="left:22px;top:683px;width:14px;height:14px;background:#fff;border:1px solid #b5b1ad;border-radius:2px"></div>
<div class="t" style="left:25px;top:684.84px;font-size:12px;color:#111;font-weight:normal;letter-spacing:0px;">&#10004;</div>
<div class="t" style="left:41.5px;top:684.20px;font-size:13px;color:#000;font-weight:normal;letter-spacing:0.192px;">Orientation Axes Visibility</div>
<div class="a" style="left:22px;top:705px;width:260px;height:1px;background:#c8c4c0"></div>
<div class="a" style="left:22px;top:719px;width:14px;height:14px;background:#fff;border:1px solid #b5b1ad;border-radius:2px"></div>
<div class="t" style="left:41.5px;top:720.00px;font-size:13px;color:#000;font-weight:normal;letter-spacing:0.156px;">Hidden Line Removal</div>
<div class="a" style="left:22px;top:744px;width:14px;height:14px;background:#fff;border:1px solid #b5b1ad;border-radius:2px"></div>
<div class="t" style="left:41.5px;top:744.90px;font-size:13px;color:#000;font-weight:normal;letter-spacing:-0.008px;">Camera Parallel Projection</div>
<div class="t" style="left:19.5px;top:777.70px;font-size:13px;color:#000;font-weight:normal;letter-spacing:0.3px;">Exit</div>
<div class="a" style="left:578px;top:775px;width:20px;height:19px;background:linear-gradient(#f5f3f1,#e9e6e2);border:1px solid #c3bfbb;border-radius:3px"></div>
<svg class="a" style="left:583px;top:780px" width="10" height="9" viewBox="0 0 10 9"><path d="M1.5 1.5 L8.5 7.5 M8.5 1.5 L1.5 7.5" stroke="#8a8a8a" stroke-width="2.6"/></svg>
<div class="a" style="left:600px;top:775px;width:437px;height:19px;border-top:1px solid #a9a6a2;border-left:1px solid #a9a6a2"></div>
<div class="a" style="left:1037px;top:34px;width:7px;height:775px;background:#84807f"></div>
<div class="a" style="left:1044px;top:3px;width:1px;height:807px;background:#2b2b2b"></div>
<div class="a" style="left:19px;top:54px;width:341px;height:405px;background:#fff;border:1px solid #b9b5b1;border-top:none"></div>
<svg class="a" style="left:25px;top:58px" width="16" height="16" viewBox="0 0 16 16"><path d="M0.9 13.8 V4 Q0.9 2.3 2.6 2.3 H6 Q7.3 2.3 7.6 4 L7.9 5.1 H14.7 V13.8z" fill="#e9b44c" stroke="#c8923a" stroke-width="0.9"/><rect x="1.4" y="5.8" width="13.2" height="7.6" fill="#f6d76a"/><path d="M0.9 13.8 H14.7" stroke="#c28c30" stroke-width="1.2"/><path d="M12.4 0.3 Q14.8 3 14.8 4.2 A2.4 2.4 0 0 1 10 4.2 Q10 3 12.4 0.3z" fill="#2b7fc2"/></svg>
<div class="t" style="left:46.5px;top:59.00px;font-size:13px;color:#000;font-weight:normal;letter-spacing:0.117px;"><u>O</u>pen...</div>
<div class="t" style="left:305.5px;top:59.00px;font-size:13px;color:#000;font-weight:normal;letter-spacing:0.28px;">Ctrl+O</div>
<svg class="a" style="left:25px;top:81px" width="16" height="16" viewBox="0 0 16 16"><path d="M0.9 4.2 H9.5 V14.8 H0.9z" fill="#e4e4e4" stroke="#9b9b9b"/><path d="M2.3 7h5.6M2.3 9h5.6M2.3 11h5.6M2.3 13h5.6" stroke="#8f8f8f"/><circle cx="10.8" cy="5" r="4.4" fill="#e8e8e8" stroke="#979797" stroke-width="1.4"/><path d="M9.4 3.8 L11 6 L12.7 3.3" stroke="#9bc38a" stroke-width="1" fill="none"/></svg>
<div class="t" style="left:46.5px;top:82.00px;font-size:13px;color:#000;font-weight:normal;letter-spacing:0.064px;"><u>R</u>ecent Files</div>
<svg class="a" style="left:25px;top:104px" width="16" height="16" viewBox="0 0 16 16"><g opacity="0.5"><path d="M0.9 5.6 H9.5 V15 H0.9z" fill="#e4e4e4" stroke="#9b9b9b"/><path d="M2.3 8h5.6M2.3 10h5.6M2.3 12h5.6M2.3 14h5.6" stroke="#8f8f8f"/><path d="M6.6 7.8 A4.4 4.4 0 1 1 14.6 8.6" stroke="#8a8a8a" stroke-width="2" fill="none"/><path d="M11.5 0.8 L15.5 2 L12.2 5z" fill="#8a8a8a"/></g></svg>
<div class="t" style="left:46.5px;top:105.00px;font-size:13px;color:#b4b4b4;font-weight:normal;letter-spacing:-0.118px;">Reload Files</div>
<div class="t" style="left:305.5px;top:105.00px;font-size:13px;color:#b4b4b4;font-weight:normal;letter-spacing:0.2px;">F5</div>
<div class="a" style="left:24px;top:123px;width:331px;height:1px;background:#c6c3bf"></div>
<svg class="a" style="left:25px;top:129px" width="16" height="16" viewBox="0 0 16 16"><rect x="0.9" y="9.7" width="14" height="4.8" fill="#d9d9d9" stroke="#8d8d8d"/><rect x="2.5" y="11.8" width="1.2" height="1.2" fill="#555"/><path d="M8.2 0.7 L12.9 7.2 H10.3 V11.5 H6 V7.2 H3.4z" fill="#2f8fd0" stroke="#1f6aa8" stroke-width="0.6"/></svg>
<div class="t" style="left:46.5px;top:130.00px;font-size:13px;color:#000;font-weight:normal;letter-spacing:0.358px;"><u>L</u>oad State...</div>
<svg class="a" style="left:25px;top:152px" width="16" height="16" viewBox="0 0 16 16"><rect x="0.9" y="9.7" width="14" height="4.8" fill="#d9d9d9" stroke="#8d8d8d"/><rect x="2.5" y="11.8" width="1.2" height="1.2" fill="#555"/><path d="M8.2 11.2 L12.9 5.2 H10.3 V0.5 H6 V5.2 H3.4z" fill="#8fc878" stroke="#6f9a5c" stroke-width="0.6"/></svg>
<div class="t" style="left:46.5px;top:153.00px;font-size:13px;color:#000;font-weight:normal;letter-spacing:0.275px;"><u>S</u>ave State...</div>
<div class="a" style="left:24px;top:171px;width:331px;height:1px;background:#c6c3bf"></div>
<svg class="a" style="left:25px;top:177px" width="16" height="16" viewBox="0 0 16 16"><g opacity="0.38"><path d="M0.9 13.7 V3.5 Q0.9 2 2.4 2 H5.8 L7.4 3.8 H14.7 V13.7z" fill="#d5d5d5" stroke="#7a7a7a"/><path d="M12 0.5 V7 M9.5 4.8 L12 7.5 L14.5 4.8" stroke="#555" stroke-width="1.8" fill="none"/></g></svg>
<div class="t" style="left:46.5px;top:178.00px;font-size:13px;color:#b4b4b4;font-weight:normal;letter-spacing:0.155px;">Save Data...</div>
<div class="t" style="left:305.5px;top:178.00px;font-size:13px;color:#b4b4b4;font-weight:normal;letter-spacing:0.28px;">Ctrl+S</div>
<svg class="a" style="left:25px;top:200px" width="16" height="16" viewBox="0 0 16 16"><path d="M0.5 3.5v-3h3M12.5 0.5h3v3M15.5 12.3v3h-3M3.5 15.3h-3v-3" stroke="#8c8c8c" fill="none"/><path d="M1.8 4.2 h3 l1.2 -1.6 h4 l1.2 1.6 h3 v8.4 h-12.4z" fill="#cacaca" stroke="#8f8f8f"/><circle cx="8.2" cy="8.2" r="3.6" fill="#9fb9cf" stroke="#7d8b97"/><circle cx="8.2" cy="8.2" r="1.8" fill="#e2f0fb"/></svg>
<div class="t" style="left:46.5px;top:201.00px;font-size:13px;color:#000;font-weight:normal;letter-spacing:0.247px;">Save Screenshot...</div>
<svg class="a" style="left:25px;top:223px" width="16" height="16" viewBox="0 0 16 16"><g opacity="0.42" fill="#6a6a6a"><circle cx="2" cy="2" r="2"/><circle cx="14" cy="2" r="2"/><circle cx="2" cy="14" r="2"/><circle cx="14" cy="14" r="2"/><path d="M12.5 3.5 L6 4.5 L7.8 6.3 L3.8 10.3 L5.7 12.2 L9.7 8.2 L11.5 10z"/></g></svg>
<div class="t" style="left:46.5px;top:224.00px;font-size:13px;color:#b4b4b4;font-weight:normal;letter-spacing:0.35px;">Export Scene...</div>
<div class="a" style="left:24px;top:242px;width:331px;height:1px;background:#c6c3bf"></div>
<svg class="a" style="left:25px;top:248px" width="16" height="16" viewBox="0 0 16 16"><path d="M1.2 7.5 h9.5 v6 h-9.5z" fill="#dcdcdc" stroke="#858585"/><path d="M10.7 9 l3.8 -1.8 v6.6 l-3.8 -1.8" fill="#cfcfcf" stroke="#858585"/><path d="M1.2 7.5 Q2 4 5.5 4 Q8 4 8.5 6 V7.5" fill="#cfcfcf" stroke="#858585"/><rect x="3" y="9" width="6" height="3" fill="#fff"/><path d="M10 0 h3 v4.5 h2 l-3.5 3.8 -3.5 -3.8 h2z" fill="#8dc46f" stroke="#6c9a55" stroke-width="0.5"/></svg>
<div class="t" style="left:46.5px;top:249.00px;font-size:13px;color:#000;font-weight:normal;letter-spacing:0.369px;">Save <u>A</u>nimation...</div>
<div class="t" style="left:46.5px;top:272.00px;font-size:13px;color:#000;font-weight:normal;letter-spacing:0.32px;">Save <u>G</u>eometry...</div>
<div class="a" style="left:24px;top:290px;width:331px;height:1px;background:#c6c3bf"></div>
<svg class="a" style="left:25px;top:296px" width="16" height="16" viewBox="0 0 16 16"><path d="M3 3.3 H13 Q14 3.3 14 4.3 V5 L15.5 8.2 L14 11.4 V12.2 Q14 13.2 13 13.2 H3 Q2 13.2 2 12.2 V11.4 L0.5 8.2 L2 5 V4.3 Q2 3.3 3 3.3z" fill="#141414"/><path d="M1 6.6 H4.5 M11.5 6.6 H15 M1 9.8 H4.5 M11.5 9.8 H15" stroke="#f0f0f0" stroke-width="0.8"/><ellipse cx="8" cy="8.2" rx="3.4" ry="3.6" fill="#f4f4f4"/><path d="M9.5 6.7 A1.9 2 0 1 0 9.5 9.7" stroke="#111" stroke-width="1.4" fill="none"/></svg>
<div class="t" style="left:46.5px;top:297.00px;font-size:13px;color:#000;font-weight:normal;letter-spacing:0.311px;">Export Now</div>
<svg class="a" style="left:25px;top:319px" width="16" height="16" viewBox="0 0 16 16"><path d="M3 3.3 H13 Q14 3.3 14 4.3 V5 L15.5 8.2 L14 11.4 V12.2 Q14 13.2 13 13.2 H3 Q2 13.2 2 12.2 V11.4 L0.5 8.2 L2 5 V4.3 Q2 3.3 3 3.3z" fill="#141414"/><path d="M1 6.6 H4.5 M11.5 6.6 H15 M1 9.8 H4.5 M11.5 9.8 H15" stroke="#f0f0f0" stroke-width="0.8"/><ellipse cx="8" cy="8.2" rx="3.4" ry="3.6" fill="#f4f4f4"/><path d="M9.5 6.7 A1.9 2 0 1 0 9.5 9.7" stroke="#111" stroke-width="1.4" fill="none"/></svg>
<div class="t" style="left:46.5px;top:320.00px;font-size:13px;color:#000;font-weight:normal;letter-spacing:0.347px;">Import Cinema Image Database...</div>
<div class="a" style="left:24px;top:338px;width:331px;height:1px;background:#c6c3bf"></div>
<svg class="a" style="left:25px;top:344px" width="16" height="16" viewBox="0 0 16 16"><rect x="1.3" y="3.8" width="12" height="10.4" fill="#d3e5f5" stroke="#6f7780" stroke-width="1"/><rect x="1.8" y="4.3" width="11" height="2.4" fill="#f4f4f4"/><path d="M1.3 6.8 H13.3 M6.8 6.8 V14.2" stroke="#6f7780"/><path d="M12.8 0.4 L15.4 4 H14 V8.1 H11.6 V4 H10.2z" fill="#2f8fd0"/></svg>
<div class="t" style="left:46.5px;top:345.00px;font-size:13px;color:#000;font-weight:normal;letter-spacing:0.408px;">Load Window Arrangement...</div>
<svg class="a" style="left:25px;top:367px" width="16" height="16" viewBox="0 0 16 16"><rect x="1.3" y="3.8" width="12" height="10.4" fill="#d3e5f5" stroke="#6f7780" stroke-width="1"/><rect x="1.8" y="4.3" width="11" height="2.4" fill="#f4f4f4"/><path d="M1.3 6.8 H13.3 M6.8 6.8 V14.2" stroke="#6f7780"/><path d="M12.8 8.1 L15.4 4.5 H14 V0.4 H11.6 V4.5 H10.2z" fill="#8fc878"/></svg>
<div class="t" style="left:46.5px;top:368.00px;font-size:13px;color:#000;font-weight:normal;letter-spacing:0.368px;">Save Window Arrangement...</div>
<div class="a" style="left:24px;top:386px;width:331px;height:1px;background:#c6c3bf"></div>
<svg class="a" style="left:25px;top:392px" width="16" height="16" viewBox="0 0 16 16"><path d="M1.2 2 Q1.2 0.6 3.5 0.6 Q5.8 0.6 5.8 2 V12 Q3.5 13.3 1.2 12z" fill="#c6c6c6" stroke="#8a8a8a" stroke-width="0.9"/><path d="M4.5 1.6 Q7 0.3 8.3 1.6 V12.5 L4.5 12z" fill="#ededed" stroke="#8a8a8a" stroke-width="0.8"/><path d="M8.3 2 Q8.3 0.6 10.6 0.6 Q12.9 0.6 12.9 2 V12 Q10.6 13.3 8.3 12z" fill="#c6c6c6" stroke="#8a8a8a" stroke-width="0.9"/><path d="M11.6 1.6 Q14 0.3 15 1.6 V12.5 L11.6 12z" fill="#ededed" stroke="#8a8a8a" stroke-width="0.8"/><path d="M3.5 11.5 L8.4 13 L13 11.5" stroke="#bbb" fill="none" stroke-width="0.8"/><circle cx="8.4" cy="12.8" r="1.7" fill="#8fc878"/></svg>
<div class="t" style="left:46.5px;top:393.00px;font-size:13px;color:#000;font-weight:normal;letter-spacing:0.244px;"><u>C</u>onnect...</div>
<svg class="a" style="left:25px;top:415px" width="16" height="16" viewBox="0 0 16 16"><path d="M1.2 2 Q1.2 0.6 3.5 0.6 Q5.8 0.6 5.8 2 V12 Q3.5 13.3 1.2 12z" fill="#c6c6c6" stroke="#8a8a8a" stroke-width="0.9"/><path d="M4.5 1.6 Q7 0.3 8.3 1.6 V12.5 L4.5 12z" fill="#ededed" stroke="#8a8a8a" stroke-width="0.8"/><path d="M8.3 2 Q8.3 0.6 10.6 0.6 Q12.9 0.6 12.9 2 V12 Q10.6 13.3 8.3 12z" fill="#c6c6c6" stroke="#8a8a8a" stroke-width="0.9"/><path d="M11.6 1.6 Q14 0.3 15 1.6 V12.5 L11.6 12z" fill="#ededed" stroke="#8a8a8a" stroke-width="0.8"/><path d="M3.5 11.5 L8.4 13 L13 11.5" stroke="#c8a0a0" fill="none" stroke-width="0.8"/><rect x="6.9" y="11.3" width="3" height="3" fill="#c8283a"/></svg>
<div class="t" style="left:46.5px;top:416.00px;font-size:13px;color:#000;font-weight:normal;letter-spacing:0.233px;"><u>D</u>isconnect</div>
<div class="a" style="left:24px;top:434px;width:331px;height:1px;background:#c6c3bf"></div>
<svg class="a" style="left:350px;top:84px" width="6" height="9" viewBox="0 0 6 9"><path d="M0 0 L6 4.5 L0 9z" fill="#333"/></svg>
<div class="a" style="left:19px;top:436px;width:341px;height:23px;background:#308cc6"></div>
<svg class="a" style="left:25px;top:440px" width="16" height="16" viewBox="0 0 16 16"><rect x="0" y="-1" width="15" height="17" fill="#2f7db5"/><path d="M1.2 6 H6 V4 L10.2 7.4 L6 10.8 V8.8 H1.2z" fill="#b5dc78"/></svg>
<div class="t" style="left:46.5px;top:441.00px;font-size:13px;color:#fff;font-weight:normal;letter-spacing:0.3px;">E<u>x</u>it</div>
<div class="t" style="left:305.5px;top:441.00px;font-size:13px;color:#fff;font-weight:normal;letter-spacing:0.28px;">Ctrl+Q</div>
</body></html>
